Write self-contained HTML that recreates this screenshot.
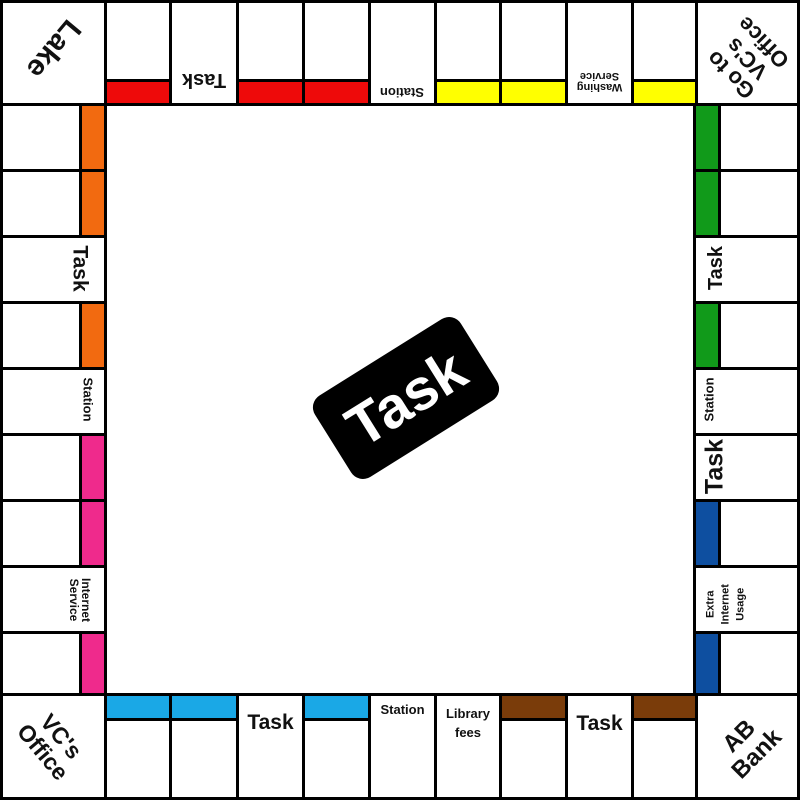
<!DOCTYPE html>
<html><head><meta charset="utf-8"><style>
html,body{margin:0;padding:0;background:#fff;}
#b{position:relative;width:800px;height:800px;overflow:hidden;font-family:"Liberation Sans",sans-serif;font-weight:bold;color:#111;}
.c{position:absolute;box-sizing:border-box;border:3px solid #000;background:#fff;}
.s{position:absolute;}
.t{position:absolute;white-space:nowrap;text-align:center;line-height:1;}
</style></head><body><div id="b">
<div class="c" style="left:0;top:0;width:800px;height:800px;border-width:3px"></div>

<div class="c" style="left:0;top:0;width:107px;height:106px"></div>
<div class="c" style="left:693px;top:0;width:107px;height:106px"></div>
<div class="c" style="left:0;top:693px;width:107px;height:107px"></div>
<div class="c" style="left:693px;top:693px;width:107px;height:107px"></div>

<div class="c" style="left:104px;top:0;width:68px;height:106px"><div class="s" style="left:0;right:0;bottom:0;height:21px;background:#ee0a0a;border-top:3px solid #000"></div></div>
<div class="c" style="left:169px;top:0;width:70px;height:106px"></div>
<div class="c" style="left:236px;top:0;width:69px;height:106px"><div class="s" style="left:0;right:0;bottom:0;height:21px;background:#ee0a0a;border-top:3px solid #000"></div></div>
<div class="c" style="left:302px;top:0;width:69px;height:106px"><div class="s" style="left:0;right:0;bottom:0;height:21px;background:#ee0a0a;border-top:3px solid #000"></div></div>
<div class="c" style="left:368px;top:0;width:69px;height:106px"></div>
<div class="c" style="left:434px;top:0;width:68px;height:106px"><div class="s" style="left:0;right:0;bottom:0;height:21px;background:#ffff00;border-top:3px solid #000"></div></div>
<div class="c" style="left:499px;top:0;width:69px;height:106px"><div class="s" style="left:0;right:0;bottom:0;height:21px;background:#ffff00;border-top:3px solid #000"></div></div>
<div class="c" style="left:565px;top:0;width:69px;height:106px"></div>
<div class="c" style="left:631px;top:0;width:67px;height:106px"><div class="s" style="left:0;right:0;bottom:0;height:21px;background:#ffff00;border-top:3px solid #000"></div></div>
<div class="t" style="left:169px;width:70px;top:70px;font-size:20px;transform:rotate(180deg)">Task</div>
<div class="t" style="left:366px;width:72px;top:86px;font-size:13px;transform:rotate(180deg)">Station</div>
<div class="t" style="left:565px;width:69px;top:70px;font-size:11px;transform:rotate(180deg)">Washing<br>Service</div>

<div class="c" style="left:104px;top:693px;width:68px;height:107px"><div class="s" style="left:0;right:0;top:0;height:22px;background:#1aa8e6;border-bottom:3px solid #000"></div></div>
<div class="c" style="left:169px;top:693px;width:70px;height:107px"><div class="s" style="left:0;right:0;top:0;height:22px;background:#1aa8e6;border-bottom:3px solid #000"></div></div>
<div class="c" style="left:236px;top:693px;width:69px;height:107px"></div>
<div class="c" style="left:302px;top:693px;width:69px;height:107px"><div class="s" style="left:0;right:0;top:0;height:22px;background:#1aa8e6;border-bottom:3px solid #000"></div></div>
<div class="c" style="left:368px;top:693px;width:69px;height:107px"></div>
<div class="c" style="left:434px;top:693px;width:68px;height:107px"></div>
<div class="c" style="left:499px;top:693px;width:69px;height:107px"><div class="s" style="left:0;right:0;top:0;height:22px;background:#7a3c0a;border-bottom:3px solid #000"></div></div>
<div class="c" style="left:565px;top:693px;width:69px;height:107px"></div>
<div class="c" style="left:631px;top:693px;width:67px;height:107px"><div class="s" style="left:0;right:0;top:0;height:22px;background:#7a3c0a;border-bottom:3px solid #000"></div></div>
<div class="t" style="left:236px;width:69px;top:712px;font-size:21px">Task</div>
<div class="t" style="left:368px;width:69px;top:703px;font-size:13px">Station</div>
<div class="t" style="left:434px;width:68px;top:705px;font-size:13px;line-height:1.45">Library<br>fees</div>
<div class="t" style="left:565px;width:69px;top:713px;font-size:21px">Task</div>

<div class="c" style="left:0;top:103px;width:107px;height:69px"><div class="s" style="top:0;bottom:0;right:0;width:22px;background:#f26a10;border-left:3px solid #000"></div></div>
<div class="c" style="left:0;top:169px;width:107px;height:69px"><div class="s" style="top:0;bottom:0;right:0;width:22px;background:#f26a10;border-left:3px solid #000"></div></div>
<div class="c" style="left:0;top:235px;width:107px;height:69px"></div>
<div class="c" style="left:0;top:301px;width:107px;height:69px"><div class="s" style="top:0;bottom:0;right:0;width:22px;background:#f26a10;border-left:3px solid #000"></div></div>
<div class="c" style="left:0;top:367px;width:107px;height:69px"></div>
<div class="c" style="left:0;top:433px;width:107px;height:69px"><div class="s" style="top:0;bottom:0;right:0;width:22px;background:#ef2a8c;border-left:3px solid #000"></div></div>
<div class="c" style="left:0;top:499px;width:107px;height:69px"><div class="s" style="top:0;bottom:0;right:0;width:22px;background:#ef2a8c;border-left:3px solid #000"></div></div>
<div class="c" style="left:0;top:565px;width:107px;height:69px"></div>
<div class="c" style="left:0;top:631px;width:107px;height:65px"><div class="s" style="top:0;bottom:0;right:0;width:22px;background:#ef2a8c;border-left:3px solid #000"></div></div>
<div class="t" style="left:47px;width:66px;top:258px;font-size:21px;transform:rotate(90deg)">Task</div>
<div class="t" style="left:55px;width:66px;top:393px;font-size:13px;transform:rotate(90deg)">Station</div>
<div class="t" style="left:47px;width:66px;top:588px;font-size:12px;transform:rotate(90deg)">Internet<br>Service</div>

<div class="c" style="left:693px;top:103px;width:107px;height:69px"><div class="s" style="top:0;bottom:0;left:0;width:22px;background:#119a1a;border-right:3px solid #000"></div></div>
<div class="c" style="left:693px;top:169px;width:107px;height:69px"><div class="s" style="top:0;bottom:0;left:0;width:22px;background:#119a1a;border-right:3px solid #000"></div></div>
<div class="c" style="left:693px;top:235px;width:107px;height:69px"></div>
<div class="c" style="left:693px;top:301px;width:107px;height:69px"><div class="s" style="top:0;bottom:0;left:0;width:22px;background:#119a1a;border-right:3px solid #000"></div></div>
<div class="c" style="left:693px;top:367px;width:107px;height:69px"></div>
<div class="c" style="left:693px;top:433px;width:107px;height:69px"></div>
<div class="c" style="left:693px;top:499px;width:107px;height:69px"><div class="s" style="top:0;bottom:0;left:0;width:22px;background:#0e4fa0;border-right:3px solid #000"></div></div>
<div class="c" style="left:693px;top:565px;width:107px;height:69px"></div>
<div class="c" style="left:693px;top:631px;width:107px;height:65px"><div class="s" style="top:0;bottom:0;left:0;width:22px;background:#0e4fa0;border-right:3px solid #000"></div></div>
<div class="t" style="left:683px;width:66px;top:258px;font-size:20px;transform:rotate(-90deg)">Task</div>
<div class="t" style="left:676px;width:66px;top:393px;font-size:13px;transform:rotate(-90deg)">Station</div>
<div class="t" style="left:680px;width:70px;top:454px;font-size:25px;transform:rotate(-90deg)">Task</div>
<div class="t" style="left:693px;width:66px;top:582px;font-size:11px;line-height:1.35;transform:rotate(-90deg)">Extra<br>Internet<br>Usage</div>

<div class="t" style="left:3px;width:100px;top:34px;font-size:29px;transform:rotate(130deg)">Lake</div>
<div class="t" style="left:692px;width:110px;top:24px;font-size:22px;line-height:1.05;transform:rotate(225deg)">Go to<br>VC's<br>Office</div>
<div class="t" style="left:0px;width:104px;top:720px;font-size:23px;line-height:1.05;transform:rotate(50deg)">VC's<br>Office</div>
<div class="t" style="left:696px;width:104px;top:720px;font-size:24px;line-height:1.05;transform:rotate(-45deg)">AB<br>Bank</div>

<div style="position:absolute;left:320px;top:350px;width:172px;height:96px;background:#000;border-radius:14px;transform:rotate(-32deg);display:flex;align-items:center;justify-content:center;color:#fff;font-size:58px;font-weight:bold;">Task</div>
</div></body></html>
